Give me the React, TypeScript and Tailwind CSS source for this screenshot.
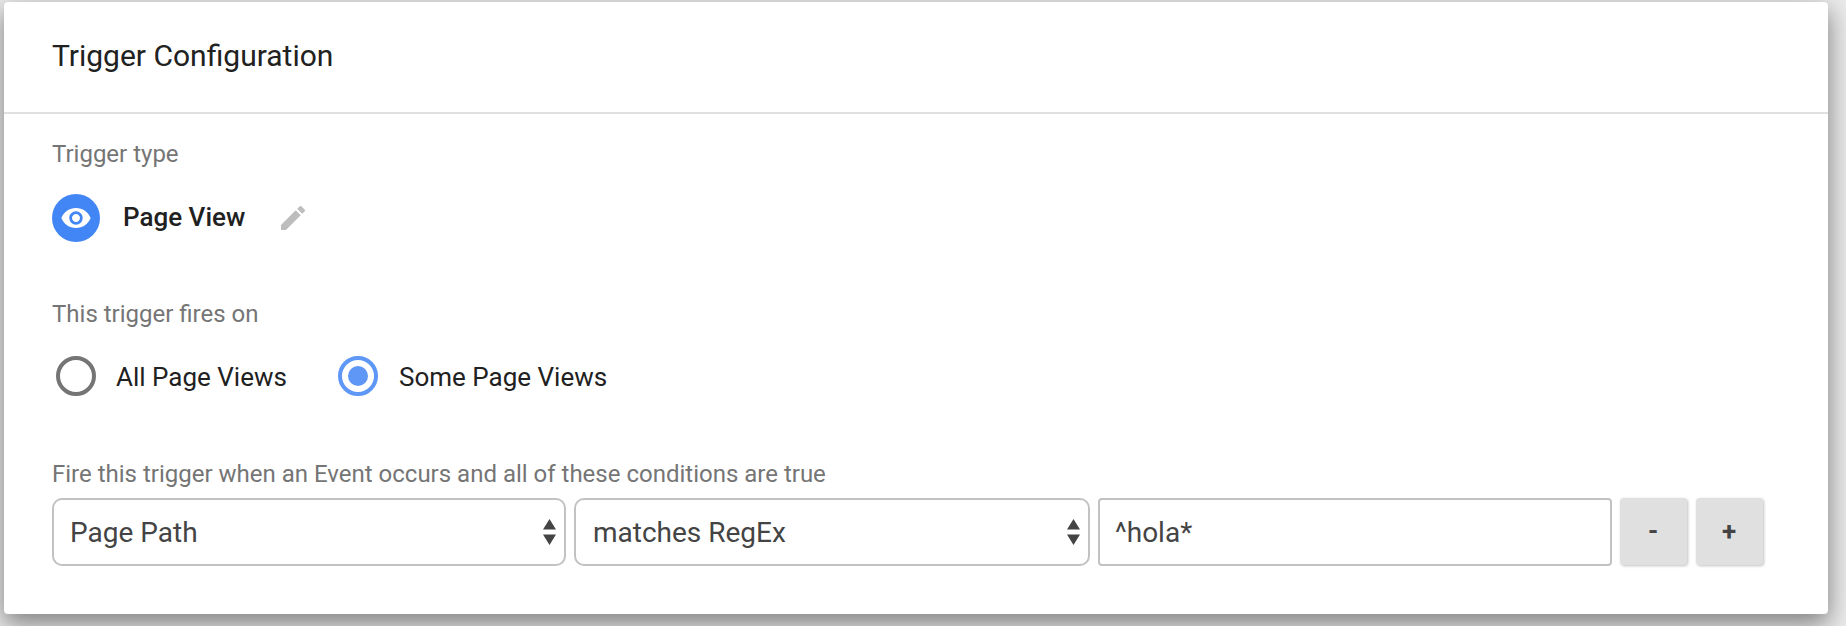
import type { ReactNode } from "react";

function Label({ children }: { children: ReactNode }) {
  return <div className="h-8 whitespace-nowrap text-[24px] leading-8 text-[#757575]">{children}</div>;
}

function Arrows() {
  return (
    <svg width="14" height="26" viewBox="0 0 14 26" fill="#444" className="shrink-0">
      <path d="M7.5 0L14 10.5H1zM1 15.5h13L7.5 26z" />
    </svg>
  );
}

function Select({ value, size }: { value: string; size: string }) {
  return (
    <button
      type="button"
      className={`flex h-[68px] shrink-0 items-center justify-between rounded-[10px] border-2 border-[#c2c2c2] bg-white pr-2 text-[28px] text-[#444] ${size}`}
    >
      <span className="pt-0.5">{value}</span>
      <Arrows />
    </button>
  );
}

function RadioMark({ checked }: { checked?: boolean }) {
  return (
    <svg width="40" height="40" viewBox="0 0 40 40" className="shrink-0">
      <circle cx="20" cy="20" r="18" fill="none" strokeWidth="4" stroke={checked ? "#5e97f6" : "#757575"} />
      {checked && <circle cx="20" cy="20" r="10" fill="#5e97f6" />}
    </svg>
  );
}

function SquareButton({ children }: { children: ReactNode }) {
  return (
    <button
      type="button"
      className="flex h-[67px] w-[67px] shrink-0 items-center justify-center rounded-[4px] bg-[#e0e0e0] pr-px text-[26px] font-bold text-[#444] shadow-[1px_1px_3px_rgba(0,0,0,0.25)]"
    >
      {children}
    </button>
  );
}

export default function App() {
  return (
    <div className="h-[626px] w-[1846px] overflow-hidden bg-[#ebebeb] pl-1 pt-0.5 font-[Roboto,sans-serif] text-[#212121]">
      <section className="h-[612px] w-[1824px] rounded-[4px] bg-white shadow-[0_10px_22px_rgba(0,0,0,0.28),0_8px_30px_rgba(0,0,0,0.24)]">
        <header className="flex h-28 items-center border-b-2 border-[#e0e0e0] pb-0.5 pl-12">
          <h1 className="text-[30px] leading-9">Trigger Configuration</h1>
        </header>
        <div className="pl-12 pt-6">
          <Label>Trigger type</Label>
          <div className="mt-6 flex h-12 items-center">
            <span className="flex h-12 w-12 items-center justify-center rounded-full bg-[#4285f4]">
              <svg width="32" height="32" viewBox="0 0 24 24" fill="#fff">
                <path d="M12 4.5C7 4.5 2.73 7.61 1 12c1.73 4.39 6 7.5 11 7.5s9.27-3.11 11-7.5c-1.73-4.39-6-7.5-11-7.5zM12 17c-2.76 0-5-2.24-5-5s2.24-5 5-5 5 2.24 5 5-2.24 5-5 5zm0-8c-1.66 0-3 1.34-3 3s1.34 3 3 3 3-1.34 3-3-1.34-3-3-3z" />
              </svg>
            </span>
            <span className="ml-[23px] whitespace-nowrap pb-0.5 text-[26px] font-medium leading-8">Page View</span>
            <svg width="32" height="32" viewBox="0 0 24 24" fill="#bdbdbd" className="ml-8">
              <path d="M3 17.25V21h3.75L17.81 9.94l-3.75-3.75L3 17.25zM20.71 7.04c.39-.39.39-1.02 0-1.41l-2.34-2.34c-.39-.39-1.02-.39-1.41 0l-1.83 1.83 3.75 3.75 1.83-1.83z" />
            </svg>
          </div>
          <div className="mt-14">
            <Label>This trigger fires on</Label>
          </div>
          <div className="ml-1 mt-[26px] flex h-10 items-center text-[26px]">
            <div className="flex w-[282px] items-center gap-5">
              <RadioMark />
              <span className="pt-0.5">All Page Views</span>
            </div>
            <div className="flex items-center gap-[21px]">
              <RadioMark checked />
              <span className="pt-0.5">Some Page Views</span>
            </div>
          </div>
          <div className="mt-[62px]">
            <Label>Fire this trigger when an Event occurs and all of these conditions are true</Label>
          </div>
          <div className="mt-2 flex items-start gap-2">
            <Select value="Page Path" size="w-[514px] pl-4" />
            <Select value="matches RegEx" size="w-[516px] pl-[17px]" />
            <div className="flex h-[68px] w-[514px] shrink-0 items-center rounded-[4px] border-2 border-[#c2c2c2] pl-[15px] pt-0.5 text-[28px] text-[#444]">
              ^hola*
            </div>
            <div className="flex gap-[9px]">
              <SquareButton>-</SquareButton>
              <SquareButton>+</SquareButton>
            </div>
          </div>
        </div>
      </section>
    </div>
  );
}
